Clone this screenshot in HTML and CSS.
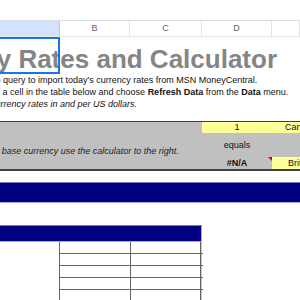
FILE: index.html
```html
<!DOCTYPE html>
<html lang="en">
<head>
    <meta charset="UTF-8">
    <link rel="stylesheet" href="styles.css">
</head>
<body>
    <div class="toolbar"></div>

    <div class="col-heads">
        <div class="col-head selected"></div>
        <div class="col-head">B</div>
        <div class="col-head">C</div>
        <div class="col-head">D</div>
        <div class="col-head"></div>
    </div>

    <div class="sheet">
        <div class="title-row">
            <h1 class="title">Currency Rates and Calculator</h1>
            <div class="selection"></div>
        </div>

        <p class="note"><span class="shift-1">Use a web query to import today's currency rates from MSN MoneyCentral.</span></p>
        <p class="note"><span class="shift-2">Select a cell in the table below and choose <b>Refresh Data</b> from the <b>Data</b> menu.</span></p>
        <p class="note note-italic"><span class="shift-3">Currency rates in and per US dollars.</span></p>

        <div class="calc">
            <div class="calc-row calc-top">
                <div></div><div></div><div></div>
                <div class="cell input center">1</div>
                <div class="cell input pick">Canadian Dollar</div>
            </div>
            <div class="calc-row calc-mid">
                <div class="cell hint"><span class="shift-4">To use a different base currency use the calculator to the right.</span></div>
                <div></div><div></div>
                <div class="cell center middle">equals</div>
                <div></div>
            </div>
            <div class="calc-row calc-bot">
                <div></div><div></div><div></div>
                <div class="cell center result">#N/A<span class="comment"></span></div>
                <div class="cell input pick pick-2">British Pound</div>
            </div>
        </div>

        <div class="band"></div>
        <div class="band band-short"></div>

        <div class="rates">
            <div class="rate-row"><div></div><div></div></div>
            <div class="rate-row"><div></div><div></div></div>
            <div class="rate-row"><div></div><div></div></div>
            <div class="rate-row"><div></div><div></div></div>
            <div class="rate-row"><div></div><div></div></div>
        </div>
    </div>
</body>
</html>
```

FILE: styles.css
```css
html, body {
    margin: 0;
    padding: 0;
    width: 300px;
    height: 300px;
    overflow: hidden;
    background: #fff;
    font-family: "Liberation Sans", Arial, sans-serif;
}

.toolbar {
    height: 20px;
}

/* column letters */
.col-heads {
    display: grid;
    grid-template-columns: 60px 70px 72px 70px 28px;
    height: 17px;
    box-sizing: border-box;
    border-top: 1px solid #dadce0;
    border-bottom: 1px solid #e6e6e6;
}

.col-head {
    border-right: 1px solid #e2e2e2;
    font-size: 9px;
    line-height: 15px;
    text-align: center;
    color: #5f6368;
}

.col-head.selected {
    background-color: #d3e3fd;
    border-right-color: #c4c7c5;
}

.sheet {
    display: flex;
    flex-direction: column;
}

.title-row {
    position: relative;
    height: 37px;
    box-sizing: border-box;
    padding-top: 7px;
}

.title {
    margin: 0 0 0 -103px;
    font-size: 26px;
    line-height: 30px;
    font-weight: bold;
    color: #858585;
    white-space: nowrap;
}

/* active cell outline, drawn over the title */
.selection {
    position: absolute;
    top: 0;
    left: -4px;
    width: 64px;
    height: 37px;
    box-sizing: border-box;
    border: 2px solid #1a73e8;
}

.note {
    margin: 0;
    height: 12px;
    font-size: 9px;
    line-height: 12px;
    color: #111;
    white-space: nowrap;
}

.note-italic {
    font-style: italic;
}

.shift-1 { margin-left: -42px; }
.shift-2 { margin-left: -25px; }
.shift-3 { margin-left: -11px; }
.shift-4 { margin-left: -70px; }

/* gray calculator block */
.calc {
    margin-top: 11px;
    background-color: #c0c0c0;
    border-top: 1px solid #3c3c3c;
    border-bottom: 2px solid #404040;
}

.calc-row {
    display: grid;
    grid-template-columns: 60px 70px 72px 70px 28px;
}

.calc-top { height: 11px; }
.calc-mid { height: 24px; }
.calc-bot { height: 12px; }

.cell {
    position: relative;
    min-width: 0;
    font-size: 9px;
    line-height: 12px;
    color: #111;
    white-space: nowrap;
}

.calc-top .cell {
    line-height: 11px;
}

.input {
    background-color: #ffff99;
}

.center {
    text-align: center;
}

.middle {
    line-height: 24px;
}

.hint {
    font-style: italic;
    line-height: 12px;
    padding-top: 12px;
    color: #222;
}

.pick {
    overflow: hidden;
    padding-left: 13px;
}

.pick-2 {
    padding-left: 16px;
}

.result {
    font-weight: bold;
}

.comment {
    position: absolute;
    top: 0;
    right: 0;
    width: 0;
    height: 0;
    border-left: 4px solid transparent;
    border-top: 4px solid #e00000;
}

/* navy section bars */
.band {
    margin-top: 11px;
    height: 21px;
    box-sizing: border-box;
    background-color: #000080;
    border-top: 1px solid #7878c8;
    border-bottom: 1px solid #a8a8e0;
}

.band-short {
    margin-top: 22px;
    width: 202px;
    height: 17px;
    border-right: 1px solid #a8a8e0;
}

/* empty rate table */
.rates {
    margin-left: 59px;
    width: 144px;
}

.rate-row {
    display: grid;
    grid-template-columns: 71px 71px;
    height: 12px;
    box-sizing: border-box;
    border-bottom: 1px solid #646464;
}

.rate-row:first-child {
    height: 12px;
}

.rate-row div {
    border-left: 1px solid #646464;
}

.rate-row div:last-child {
    border-right: 1px solid #646464;
    box-shadow: 1px 0 0 #c8c8c8;
}
```
